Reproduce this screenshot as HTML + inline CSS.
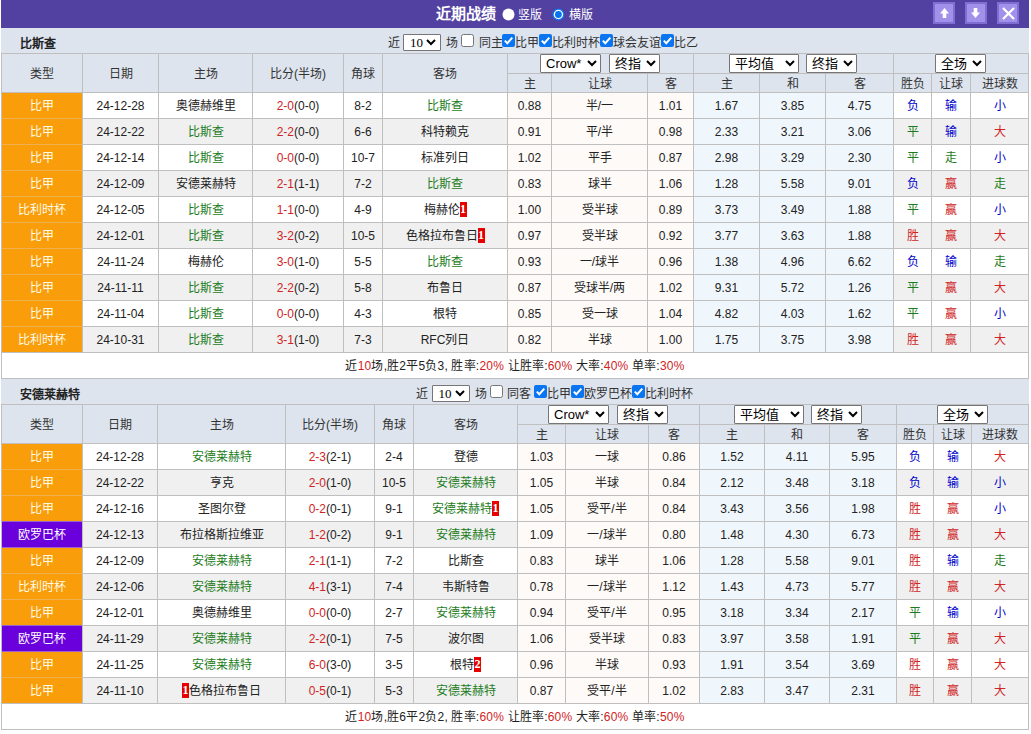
<!DOCTYPE html>
<html lang="zh-CN"><head><meta charset="utf-8"><style>
html,body{margin:0;padding:0;background:#fff;width:1031px;height:734px;overflow:hidden;}
body{font-family:"Liberation Sans",sans-serif;font-size:12px;color:#333;position:relative;}
.a{position:absolute;box-sizing:content-box;}
.c{text-align:center;white-space:nowrap;}
.l{text-align:left;white-space:nowrap;}
.b{font-weight:bold;}
.h{color:#333;}
.d{color:#222;}
.g{color:#333;}
.bd{background:#e60000;color:#fff;font-weight:bold;display:inline-block;width:7px;height:15px;line-height:15px;text-align:center;vertical-align:top;margin-top:4px;font-family:"Liberation Serif",serif;}
.sel{background:#fff;border:1px solid #767676;border-radius:1px;}
.sl{position:absolute;left:5px;top:0;line-height:17px;font-size:13px;color:#000;}
.sl.mono{font-family:"Liberation Serif",serif;font-size:13px;}
</style></head><body>
<div class="a" style="left:1px;top:0px;width:1028px;height:28px;background:#5241a0;"></div><div class="a l b" style="left:436px;top:4px;width:62px;height:20px;line-height:20px;color:#fff;font-size:15px;">近期战绩</div><svg class="a" style="left:500px;top:6px" width="17" height="17" viewBox="0 0 17 17"><circle cx="8.5" cy="8.5" r="6" fill="#fff"/></svg><div class="a l" style="left:518px;top:6px;width:30px;height:18px;line-height:18px;color:#fff;">竖版</div><svg class="a" style="left:550px;top:6px" width="17" height="17" viewBox="0 0 17 17"><circle cx="8.4" cy="8.5" r="5.4" fill="#fff" stroke="#0a75f0" stroke-width="1.3"/><circle cx="8.4" cy="8.5" r="3.4" fill="#0a75f0"/></svg><div class="a l" style="left:569px;top:6px;width:30px;height:18px;line-height:18px;color:#fff;">横版</div><div class="a" style="left:933px;top:2px;width:18px;height:18px;background:#a291ea;border:2px solid #7f6fd2"><svg style="position:absolute;left:5px;top:4px" width="11" height="11" viewBox="0 0 11 11"><path d="M4.5 0 L9 5.5 L6.3 5.5 L6.3 10 L2.7 10 L2.7 5.5 L0 5.5 Z" fill="#fff"/></svg></div><div class="a" style="left:965px;top:2px;width:18px;height:18px;background:#a291ea;border:2px solid #7f6fd2"><svg style="position:absolute;left:4px;top:4px" width="11" height="11" viewBox="0 0 11 11"><path d="M4.5 10 L9 4.5 L6.3 4.5 L6.3 0 L2.7 0 L2.7 4.5 L0 4.5 Z" fill="#fff"/></svg></div><div class="a" style="left:997px;top:2px;width:18px;height:18px;background:#a291ea;border:2px solid #7f6fd2"><svg style="position:absolute;left:3px;top:3px" width="13" height="13" viewBox="0 0 13 13"><path d="M1 1 L12 12 M12 1 L1 12" stroke="#fff" stroke-width="2.2" fill="none"/></svg></div><div class="a" style="left:1px;top:28px;width:1028px;height:25px;background:#dde4ee;"></div><div class="a l b" style="left:20px;top:34px;width:120px;height:20px;line-height:20px;color:#222;">比斯查</div><div class="a l g" style="left:387.5px;top:35px;width:14px;height:16px;line-height:16px;">近</div><div class="a sel" style="left:403.0px;top:34px;width:36px;height:15px;"><span class="sl mono" style="left:6px;line-height:15px">10</span><svg width="10" height="7" viewBox="0 0 10 7" style="position:absolute;right:4px;top:4px"><path d="M1 1 L5 5 L9 1" fill="none" stroke="#000" stroke-width="2"/></svg></div><div class="a l g" style="left:446.0px;top:35px;width:14px;height:16px;line-height:16px;">场</div><svg class="a" style="left:461.0px;top:34px" width="13" height="13" viewBox="0 0 13 13"><rect x="0.5" y="0.5" width="12" height="12" rx="2" fill="#fff" stroke="#767676"/></svg><div class="a l g" style="left:478.5px;top:35px;width:30px;height:16px;line-height:16px;">同主</div><svg class="a" style="left:502px;top:34px" width="13" height="13" viewBox="0 0 13 13"><rect x="0" y="0" width="13" height="13" rx="2" fill="#0a75f0"/><path d="M2.8 6.6 L5.3 9.2 L10.3 3.6" fill="none" stroke="#fff" stroke-width="2"/></svg><div class="a l g" style="left:515.2px;top:35px;width:28px;height:16px;line-height:16px;">比甲</div><svg class="a" style="left:539px;top:34px" width="13" height="13" viewBox="0 0 13 13"><rect x="0" y="0" width="13" height="13" rx="2" fill="#0a75f0"/><path d="M2.8 6.6 L5.3 9.2 L10.3 3.6" fill="none" stroke="#fff" stroke-width="2"/></svg><div class="a l g" style="left:552.2px;top:35px;width:52px;height:16px;line-height:16px;">比利时杯</div><svg class="a" style="left:600px;top:34px" width="13" height="13" viewBox="0 0 13 13"><rect x="0" y="0" width="13" height="13" rx="2" fill="#0a75f0"/><path d="M2.8 6.6 L5.3 9.2 L10.3 3.6" fill="none" stroke="#fff" stroke-width="2"/></svg><div class="a l g" style="left:613.2px;top:35px;width:52px;height:16px;line-height:16px;">球会友谊</div><svg class="a" style="left:661px;top:34px" width="13" height="13" viewBox="0 0 13 13"><rect x="0" y="0" width="13" height="13" rx="2" fill="#0a75f0"/><path d="M2.8 6.6 L5.3 9.2 L10.3 3.6" fill="none" stroke="#fff" stroke-width="2"/></svg><div class="a l g" style="left:674.2px;top:35px;width:28px;height:16px;line-height:16px;">比乙</div><div class="a" style="left:1px;top:53px;width:1028px;height:39px;background:#dde4ee;"></div><div class="a" style="left:1px;top:93px;width:1028px;height:25px;background:#fff;"></div><div class="a" style="left:2px;top:93px;width:80px;height:25px;background:#fa9d0b;"></div><div class="a" style="left:508px;top:93px;width:185px;height:25px;background:#fdfaf8;"></div><div class="a" style="left:694px;top:93px;width:199px;height:25px;background:#f0f7fc;"></div><div class="a" style="left:1px;top:119px;width:1028px;height:25px;background:#f0f0f0;"></div><div class="a" style="left:2px;top:119px;width:80px;height:25px;background:#fa9d0b;"></div><div class="a" style="left:508px;top:119px;width:185px;height:25px;background:#fdfaf8;"></div><div class="a" style="left:694px;top:119px;width:199px;height:25px;background:#f0f7fc;"></div><div class="a" style="left:1px;top:145px;width:1028px;height:25px;background:#fff;"></div><div class="a" style="left:2px;top:145px;width:80px;height:25px;background:#fa9d0b;"></div><div class="a" style="left:508px;top:145px;width:185px;height:25px;background:#fdfaf8;"></div><div class="a" style="left:694px;top:145px;width:199px;height:25px;background:#f0f7fc;"></div><div class="a" style="left:1px;top:171px;width:1028px;height:25px;background:#f0f0f0;"></div><div class="a" style="left:2px;top:171px;width:80px;height:25px;background:#fa9d0b;"></div><div class="a" style="left:508px;top:171px;width:185px;height:25px;background:#fdfaf8;"></div><div class="a" style="left:694px;top:171px;width:199px;height:25px;background:#f0f7fc;"></div><div class="a" style="left:1px;top:197px;width:1028px;height:25px;background:#fff;"></div><div class="a" style="left:2px;top:197px;width:80px;height:25px;background:#fa9d0b;"></div><div class="a" style="left:508px;top:197px;width:185px;height:25px;background:#fdfaf8;"></div><div class="a" style="left:694px;top:197px;width:199px;height:25px;background:#f0f7fc;"></div><div class="a" style="left:1px;top:223px;width:1028px;height:25px;background:#f0f0f0;"></div><div class="a" style="left:2px;top:223px;width:80px;height:25px;background:#fa9d0b;"></div><div class="a" style="left:508px;top:223px;width:185px;height:25px;background:#fdfaf8;"></div><div class="a" style="left:694px;top:223px;width:199px;height:25px;background:#f0f7fc;"></div><div class="a" style="left:1px;top:249px;width:1028px;height:25px;background:#fff;"></div><div class="a" style="left:2px;top:249px;width:80px;height:25px;background:#fa9d0b;"></div><div class="a" style="left:508px;top:249px;width:185px;height:25px;background:#fdfaf8;"></div><div class="a" style="left:694px;top:249px;width:199px;height:25px;background:#f0f7fc;"></div><div class="a" style="left:1px;top:275px;width:1028px;height:25px;background:#f0f0f0;"></div><div class="a" style="left:2px;top:275px;width:80px;height:25px;background:#fa9d0b;"></div><div class="a" style="left:508px;top:275px;width:185px;height:25px;background:#fdfaf8;"></div><div class="a" style="left:694px;top:275px;width:199px;height:25px;background:#f0f7fc;"></div><div class="a" style="left:1px;top:301px;width:1028px;height:25px;background:#fff;"></div><div class="a" style="left:2px;top:301px;width:80px;height:25px;background:#fa9d0b;"></div><div class="a" style="left:508px;top:301px;width:185px;height:25px;background:#fdfaf8;"></div><div class="a" style="left:694px;top:301px;width:199px;height:25px;background:#f0f7fc;"></div><div class="a" style="left:1px;top:327px;width:1028px;height:25px;background:#f0f0f0;"></div><div class="a" style="left:2px;top:327px;width:80px;height:25px;background:#fa9d0b;"></div><div class="a" style="left:508px;top:327px;width:185px;height:25px;background:#fdfaf8;"></div><div class="a" style="left:694px;top:327px;width:199px;height:25px;background:#f0f7fc;"></div><div class="a" style="left:1px;top:353px;width:1028px;height:25px;background:#fff;"></div><div class="a" style="left:1px;top:53px;width:1028px;height:1px;background:#bfbfbf;"></div><div class="a" style="left:507px;top:73px;width:522px;height:1px;background:#bfbfbf;"></div><div class="a" style="left:1px;top:92px;width:1028px;height:1px;background:#bfbfbf;"></div><div class="a" style="left:1px;top:118px;width:1028px;height:1px;background:#bfbfbf;"></div><div class="a" style="left:1px;top:144px;width:1028px;height:1px;background:#bfbfbf;"></div><div class="a" style="left:1px;top:170px;width:1028px;height:1px;background:#bfbfbf;"></div><div class="a" style="left:1px;top:196px;width:1028px;height:1px;background:#bfbfbf;"></div><div class="a" style="left:1px;top:222px;width:1028px;height:1px;background:#bfbfbf;"></div><div class="a" style="left:1px;top:248px;width:1028px;height:1px;background:#bfbfbf;"></div><div class="a" style="left:1px;top:274px;width:1028px;height:1px;background:#bfbfbf;"></div><div class="a" style="left:1px;top:300px;width:1028px;height:1px;background:#bfbfbf;"></div><div class="a" style="left:1px;top:326px;width:1028px;height:1px;background:#bfbfbf;"></div><div class="a" style="left:1px;top:352px;width:1028px;height:1px;background:#bfbfbf;"></div><div class="a" style="left:1px;top:378px;width:1028px;height:1px;background:#bfbfbf;"></div><div class="a" style="left:1px;top:53px;width:1px;height:300px;background:#bfbfbf;"></div><div class="a" style="left:82px;top:53px;width:1px;height:300px;background:#bfbfbf;"></div><div class="a" style="left:158px;top:53px;width:1px;height:300px;background:#bfbfbf;"></div><div class="a" style="left:252px;top:53px;width:1px;height:300px;background:#bfbfbf;"></div><div class="a" style="left:343px;top:53px;width:1px;height:300px;background:#bfbfbf;"></div><div class="a" style="left:382px;top:53px;width:1px;height:300px;background:#bfbfbf;"></div><div class="a" style="left:507px;top:53px;width:1px;height:300px;background:#bfbfbf;"></div><div class="a" style="left:551px;top:73px;width:1px;height:280px;background:#bfbfbf;"></div><div class="a" style="left:647px;top:73px;width:1px;height:280px;background:#bfbfbf;"></div><div class="a" style="left:693px;top:53px;width:1px;height:300px;background:#bfbfbf;"></div><div class="a" style="left:759px;top:73px;width:1px;height:280px;background:#bfbfbf;"></div><div class="a" style="left:825px;top:73px;width:1px;height:280px;background:#bfbfbf;"></div><div class="a" style="left:893px;top:53px;width:1px;height:300px;background:#bfbfbf;"></div><div class="a" style="left:931px;top:73px;width:1px;height:280px;background:#bfbfbf;"></div><div class="a" style="left:970px;top:73px;width:1px;height:280px;background:#bfbfbf;"></div><div class="a" style="left:1028px;top:53px;width:1px;height:300px;background:#bfbfbf;"></div><div class="a" style="left:1px;top:352px;width:1px;height:27px;background:#bfbfbf;"></div><div class="a" style="left:1028px;top:352px;width:1px;height:27px;background:#bfbfbf;"></div><div class="a" style="left:2px;top:118px;width:80px;height:1px;background:#f0b050;"></div><div class="a" style="left:2px;top:144px;width:80px;height:1px;background:#f0b050;"></div><div class="a" style="left:2px;top:170px;width:80px;height:1px;background:#f0b050;"></div><div class="a" style="left:2px;top:196px;width:80px;height:1px;background:#f0b050;"></div><div class="a" style="left:2px;top:222px;width:80px;height:1px;background:#f0b050;"></div><div class="a" style="left:2px;top:248px;width:80px;height:1px;background:#f0b050;"></div><div class="a" style="left:2px;top:274px;width:80px;height:1px;background:#f0b050;"></div><div class="a" style="left:2px;top:300px;width:80px;height:1px;background:#f0b050;"></div><div class="a" style="left:2px;top:326px;width:80px;height:1px;background:#f0b050;"></div><div class="a c h" style="left:2px;top:55px;width:80px;height:38px;line-height:38px;">类型</div><div class="a c h" style="left:83px;top:55px;width:75px;height:38px;line-height:38px;">日期</div><div class="a c h" style="left:159px;top:55px;width:93px;height:38px;line-height:38px;">主场</div><div class="a c h" style="left:253px;top:55px;width:90px;height:38px;line-height:38px;">比分(半场)</div><div class="a c h" style="left:344px;top:55px;width:38px;height:38px;line-height:38px;">角球</div><div class="a c h" style="left:383px;top:55px;width:124px;height:38px;line-height:38px;">客场</div><div class="a c h" style="left:508px;top:75px;width:43px;height:18px;line-height:18px;">主</div><div class="a c h" style="left:552px;top:75px;width:95px;height:18px;line-height:18px;">让球</div><div class="a c h" style="left:648px;top:75px;width:45px;height:18px;line-height:18px;">客</div><div class="a c h" style="left:694px;top:75px;width:65px;height:18px;line-height:18px;">主</div><div class="a c h" style="left:760px;top:75px;width:65px;height:18px;line-height:18px;">和</div><div class="a c h" style="left:826px;top:75px;width:67px;height:18px;line-height:18px;">客</div><div class="a c h" style="left:894px;top:75px;width:37px;height:18px;line-height:18px;">胜负</div><div class="a c h" style="left:932px;top:75px;width:38px;height:18px;line-height:18px;">让球</div><div class="a c h" style="left:971px;top:75px;width:57px;height:18px;line-height:18px;">进球数</div><div class="a sel" style="left:540px;top:54px;width:59px;height:17px;"><span class="sl " style="left:5px;line-height:17px">Crow*</span><svg width="10" height="7" viewBox="0 0 10 7" style="position:absolute;right:3px;top:5px"><path d="M1 1 L5 5 L9 1" fill="none" stroke="#000" stroke-width="2"/></svg></div><div class="a sel" style="left:609px;top:54px;width:49px;height:17px;"><span class="sl " style="left:5px;line-height:17px">终指</span><svg width="10" height="7" viewBox="0 0 10 7" style="position:absolute;right:3px;top:5px"><path d="M1 1 L5 5 L9 1" fill="none" stroke="#000" stroke-width="2"/></svg></div><div class="a sel" style="left:729px;top:54px;width:68px;height:17px;"><span class="sl " style="left:5px;line-height:17px">平均值</span><svg width="10" height="7" viewBox="0 0 10 7" style="position:absolute;right:3px;top:5px"><path d="M1 1 L5 5 L9 1" fill="none" stroke="#000" stroke-width="2"/></svg></div><div class="a sel" style="left:806px;top:54px;width:49px;height:17px;"><span class="sl " style="left:5px;line-height:17px">终指</span><svg width="10" height="7" viewBox="0 0 10 7" style="position:absolute;right:3px;top:5px"><path d="M1 1 L5 5 L9 1" fill="none" stroke="#000" stroke-width="2"/></svg></div><div class="a sel" style="left:935px;top:54px;width:49px;height:17px;"><span class="sl " style="left:5px;line-height:17px">全场</span><svg width="10" height="7" viewBox="0 0 10 7" style="position:absolute;right:3px;top:5px"><path d="M1 1 L5 5 L9 1" fill="none" stroke="#000" stroke-width="2"/></svg></div><div class="a c d" style="left:2px;top:94px;width:80px;height:25px;line-height:25px;"><span style="color:#fffbe6">比甲</span></div><div class="a c d" style="left:83px;top:94px;width:75px;height:25px;line-height:25px;">24-12-28</div><div class="a c d" style="left:159px;top:94px;width:93px;height:25px;line-height:25px;"><span style="color:#222">奥德赫维里</span></div><div class="a c d" style="left:253px;top:94px;width:90px;height:25px;line-height:25px;"><span style="color:#d02424">2-0</span>(0-0)</div><div class="a c d" style="left:344px;top:94px;width:38px;height:25px;line-height:25px;">8-2</div><div class="a c d" style="left:383px;top:94px;width:124px;height:25px;line-height:25px;"><span style="color:#1c7c1c">比斯查</span></div><div class="a c d" style="left:508px;top:94px;width:43px;height:25px;line-height:25px;">0.88</div><div class="a c d" style="left:552px;top:94px;width:95px;height:25px;line-height:25px;">半/一</div><div class="a c d" style="left:648px;top:94px;width:45px;height:25px;line-height:25px;">1.01</div><div class="a c d" style="left:694px;top:94px;width:65px;height:25px;line-height:25px;">1.67</div><div class="a c d" style="left:760px;top:94px;width:65px;height:25px;line-height:25px;">3.85</div><div class="a c d" style="left:826px;top:94px;width:67px;height:25px;line-height:25px;">4.75</div><div class="a c d" style="left:894px;top:94px;width:37px;height:25px;line-height:25px;"><span style="color:#0000cc">负</span></div><div class="a c d" style="left:932px;top:94px;width:38px;height:25px;line-height:25px;"><span style="color:#0000cc">输</span></div><div class="a c d" style="left:971px;top:94px;width:57px;height:25px;line-height:25px;"><span style="color:#0000cc">小</span></div><div class="a c d" style="left:2px;top:120px;width:80px;height:25px;line-height:25px;"><span style="color:#fffbe6">比甲</span></div><div class="a c d" style="left:83px;top:120px;width:75px;height:25px;line-height:25px;">24-12-22</div><div class="a c d" style="left:159px;top:120px;width:93px;height:25px;line-height:25px;"><span style="color:#1c7c1c">比斯查</span></div><div class="a c d" style="left:253px;top:120px;width:90px;height:25px;line-height:25px;"><span style="color:#d02424">2-2</span>(0-0)</div><div class="a c d" style="left:344px;top:120px;width:38px;height:25px;line-height:25px;">6-6</div><div class="a c d" style="left:383px;top:120px;width:124px;height:25px;line-height:25px;"><span style="color:#222">科特赖克</span></div><div class="a c d" style="left:508px;top:120px;width:43px;height:25px;line-height:25px;">0.91</div><div class="a c d" style="left:552px;top:120px;width:95px;height:25px;line-height:25px;">平/半</div><div class="a c d" style="left:648px;top:120px;width:45px;height:25px;line-height:25px;">0.98</div><div class="a c d" style="left:694px;top:120px;width:65px;height:25px;line-height:25px;">2.33</div><div class="a c d" style="left:760px;top:120px;width:65px;height:25px;line-height:25px;">3.21</div><div class="a c d" style="left:826px;top:120px;width:67px;height:25px;line-height:25px;">3.06</div><div class="a c d" style="left:894px;top:120px;width:37px;height:25px;line-height:25px;"><span style="color:#1c7c1c">平</span></div><div class="a c d" style="left:932px;top:120px;width:38px;height:25px;line-height:25px;"><span style="color:#0000cc">输</span></div><div class="a c d" style="left:971px;top:120px;width:57px;height:25px;line-height:25px;"><span style="color:#d02424">大</span></div><div class="a c d" style="left:2px;top:146px;width:80px;height:25px;line-height:25px;"><span style="color:#fffbe6">比甲</span></div><div class="a c d" style="left:83px;top:146px;width:75px;height:25px;line-height:25px;">24-12-14</div><div class="a c d" style="left:159px;top:146px;width:93px;height:25px;line-height:25px;"><span style="color:#1c7c1c">比斯查</span></div><div class="a c d" style="left:253px;top:146px;width:90px;height:25px;line-height:25px;"><span style="color:#d02424">0-0</span>(0-0)</div><div class="a c d" style="left:344px;top:146px;width:38px;height:25px;line-height:25px;">10-7</div><div class="a c d" style="left:383px;top:146px;width:124px;height:25px;line-height:25px;"><span style="color:#222">标准列日</span></div><div class="a c d" style="left:508px;top:146px;width:43px;height:25px;line-height:25px;">1.02</div><div class="a c d" style="left:552px;top:146px;width:95px;height:25px;line-height:25px;">平手</div><div class="a c d" style="left:648px;top:146px;width:45px;height:25px;line-height:25px;">0.87</div><div class="a c d" style="left:694px;top:146px;width:65px;height:25px;line-height:25px;">2.98</div><div class="a c d" style="left:760px;top:146px;width:65px;height:25px;line-height:25px;">3.29</div><div class="a c d" style="left:826px;top:146px;width:67px;height:25px;line-height:25px;">2.30</div><div class="a c d" style="left:894px;top:146px;width:37px;height:25px;line-height:25px;"><span style="color:#1c7c1c">平</span></div><div class="a c d" style="left:932px;top:146px;width:38px;height:25px;line-height:25px;"><span style="color:#1c7c1c">走</span></div><div class="a c d" style="left:971px;top:146px;width:57px;height:25px;line-height:25px;"><span style="color:#0000cc">小</span></div><div class="a c d" style="left:2px;top:172px;width:80px;height:25px;line-height:25px;"><span style="color:#fffbe6">比甲</span></div><div class="a c d" style="left:83px;top:172px;width:75px;height:25px;line-height:25px;">24-12-09</div><div class="a c d" style="left:159px;top:172px;width:93px;height:25px;line-height:25px;"><span style="color:#222">安德莱赫特</span></div><div class="a c d" style="left:253px;top:172px;width:90px;height:25px;line-height:25px;"><span style="color:#d02424">2-1</span>(1-1)</div><div class="a c d" style="left:344px;top:172px;width:38px;height:25px;line-height:25px;">7-2</div><div class="a c d" style="left:383px;top:172px;width:124px;height:25px;line-height:25px;"><span style="color:#1c7c1c">比斯查</span></div><div class="a c d" style="left:508px;top:172px;width:43px;height:25px;line-height:25px;">0.83</div><div class="a c d" style="left:552px;top:172px;width:95px;height:25px;line-height:25px;">球半</div><div class="a c d" style="left:648px;top:172px;width:45px;height:25px;line-height:25px;">1.06</div><div class="a c d" style="left:694px;top:172px;width:65px;height:25px;line-height:25px;">1.28</div><div class="a c d" style="left:760px;top:172px;width:65px;height:25px;line-height:25px;">5.58</div><div class="a c d" style="left:826px;top:172px;width:67px;height:25px;line-height:25px;">9.01</div><div class="a c d" style="left:894px;top:172px;width:37px;height:25px;line-height:25px;"><span style="color:#0000cc">负</span></div><div class="a c d" style="left:932px;top:172px;width:38px;height:25px;line-height:25px;"><span style="color:#d02424">赢</span></div><div class="a c d" style="left:971px;top:172px;width:57px;height:25px;line-height:25px;"><span style="color:#1c7c1c">走</span></div><div class="a c d" style="left:2px;top:198px;width:80px;height:25px;line-height:25px;"><span style="color:#fffbe6">比利时杯</span></div><div class="a c d" style="left:83px;top:198px;width:75px;height:25px;line-height:25px;">24-12-05</div><div class="a c d" style="left:159px;top:198px;width:93px;height:25px;line-height:25px;"><span style="color:#1c7c1c">比斯查</span></div><div class="a c d" style="left:253px;top:198px;width:90px;height:25px;line-height:25px;"><span style="color:#d02424">1-1</span>(0-0)</div><div class="a c d" style="left:344px;top:198px;width:38px;height:25px;line-height:25px;">4-9</div><div class="a c d" style="left:383px;top:198px;width:124px;height:25px;line-height:25px;"><span style="color:#222">梅赫伦<span class="bd">1</span></span></div><div class="a c d" style="left:508px;top:198px;width:43px;height:25px;line-height:25px;">1.00</div><div class="a c d" style="left:552px;top:198px;width:95px;height:25px;line-height:25px;">受半球</div><div class="a c d" style="left:648px;top:198px;width:45px;height:25px;line-height:25px;">0.89</div><div class="a c d" style="left:694px;top:198px;width:65px;height:25px;line-height:25px;">3.73</div><div class="a c d" style="left:760px;top:198px;width:65px;height:25px;line-height:25px;">3.49</div><div class="a c d" style="left:826px;top:198px;width:67px;height:25px;line-height:25px;">1.88</div><div class="a c d" style="left:894px;top:198px;width:37px;height:25px;line-height:25px;"><span style="color:#1c7c1c">平</span></div><div class="a c d" style="left:932px;top:198px;width:38px;height:25px;line-height:25px;"><span style="color:#d02424">赢</span></div><div class="a c d" style="left:971px;top:198px;width:57px;height:25px;line-height:25px;"><span style="color:#0000cc">小</span></div><div class="a c d" style="left:2px;top:224px;width:80px;height:25px;line-height:25px;"><span style="color:#fffbe6">比甲</span></div><div class="a c d" style="left:83px;top:224px;width:75px;height:25px;line-height:25px;">24-12-01</div><div class="a c d" style="left:159px;top:224px;width:93px;height:25px;line-height:25px;"><span style="color:#1c7c1c">比斯查</span></div><div class="a c d" style="left:253px;top:224px;width:90px;height:25px;line-height:25px;"><span style="color:#d02424">3-2</span>(0-2)</div><div class="a c d" style="left:344px;top:224px;width:38px;height:25px;line-height:25px;">10-5</div><div class="a c d" style="left:383px;top:224px;width:124px;height:25px;line-height:25px;"><span style="color:#222">色格拉布鲁日<span class="bd">1</span></span></div><div class="a c d" style="left:508px;top:224px;width:43px;height:25px;line-height:25px;">0.97</div><div class="a c d" style="left:552px;top:224px;width:95px;height:25px;line-height:25px;">受半球</div><div class="a c d" style="left:648px;top:224px;width:45px;height:25px;line-height:25px;">0.92</div><div class="a c d" style="left:694px;top:224px;width:65px;height:25px;line-height:25px;">3.77</div><div class="a c d" style="left:760px;top:224px;width:65px;height:25px;line-height:25px;">3.63</div><div class="a c d" style="left:826px;top:224px;width:67px;height:25px;line-height:25px;">1.88</div><div class="a c d" style="left:894px;top:224px;width:37px;height:25px;line-height:25px;"><span style="color:#d02424">胜</span></div><div class="a c d" style="left:932px;top:224px;width:38px;height:25px;line-height:25px;"><span style="color:#d02424">赢</span></div><div class="a c d" style="left:971px;top:224px;width:57px;height:25px;line-height:25px;"><span style="color:#d02424">大</span></div><div class="a c d" style="left:2px;top:250px;width:80px;height:25px;line-height:25px;"><span style="color:#fffbe6">比甲</span></div><div class="a c d" style="left:83px;top:250px;width:75px;height:25px;line-height:25px;">24-11-24</div><div class="a c d" style="left:159px;top:250px;width:93px;height:25px;line-height:25px;"><span style="color:#222">梅赫伦</span></div><div class="a c d" style="left:253px;top:250px;width:90px;height:25px;line-height:25px;"><span style="color:#d02424">3-0</span>(1-0)</div><div class="a c d" style="left:344px;top:250px;width:38px;height:25px;line-height:25px;">5-5</div><div class="a c d" style="left:383px;top:250px;width:124px;height:25px;line-height:25px;"><span style="color:#1c7c1c">比斯查</span></div><div class="a c d" style="left:508px;top:250px;width:43px;height:25px;line-height:25px;">0.93</div><div class="a c d" style="left:552px;top:250px;width:95px;height:25px;line-height:25px;">一/球半</div><div class="a c d" style="left:648px;top:250px;width:45px;height:25px;line-height:25px;">0.96</div><div class="a c d" style="left:694px;top:250px;width:65px;height:25px;line-height:25px;">1.38</div><div class="a c d" style="left:760px;top:250px;width:65px;height:25px;line-height:25px;">4.96</div><div class="a c d" style="left:826px;top:250px;width:67px;height:25px;line-height:25px;">6.62</div><div class="a c d" style="left:894px;top:250px;width:37px;height:25px;line-height:25px;"><span style="color:#0000cc">负</span></div><div class="a c d" style="left:932px;top:250px;width:38px;height:25px;line-height:25px;"><span style="color:#0000cc">输</span></div><div class="a c d" style="left:971px;top:250px;width:57px;height:25px;line-height:25px;"><span style="color:#1c7c1c">走</span></div><div class="a c d" style="left:2px;top:276px;width:80px;height:25px;line-height:25px;"><span style="color:#fffbe6">比甲</span></div><div class="a c d" style="left:83px;top:276px;width:75px;height:25px;line-height:25px;">24-11-11</div><div class="a c d" style="left:159px;top:276px;width:93px;height:25px;line-height:25px;"><span style="color:#1c7c1c">比斯查</span></div><div class="a c d" style="left:253px;top:276px;width:90px;height:25px;line-height:25px;"><span style="color:#d02424">2-2</span>(0-2)</div><div class="a c d" style="left:344px;top:276px;width:38px;height:25px;line-height:25px;">5-8</div><div class="a c d" style="left:383px;top:276px;width:124px;height:25px;line-height:25px;"><span style="color:#222">布鲁日</span></div><div class="a c d" style="left:508px;top:276px;width:43px;height:25px;line-height:25px;">0.87</div><div class="a c d" style="left:552px;top:276px;width:95px;height:25px;line-height:25px;">受球半/两</div><div class="a c d" style="left:648px;top:276px;width:45px;height:25px;line-height:25px;">1.02</div><div class="a c d" style="left:694px;top:276px;width:65px;height:25px;line-height:25px;">9.31</div><div class="a c d" style="left:760px;top:276px;width:65px;height:25px;line-height:25px;">5.72</div><div class="a c d" style="left:826px;top:276px;width:67px;height:25px;line-height:25px;">1.26</div><div class="a c d" style="left:894px;top:276px;width:37px;height:25px;line-height:25px;"><span style="color:#1c7c1c">平</span></div><div class="a c d" style="left:932px;top:276px;width:38px;height:25px;line-height:25px;"><span style="color:#d02424">赢</span></div><div class="a c d" style="left:971px;top:276px;width:57px;height:25px;line-height:25px;"><span style="color:#d02424">大</span></div><div class="a c d" style="left:2px;top:302px;width:80px;height:25px;line-height:25px;"><span style="color:#fffbe6">比甲</span></div><div class="a c d" style="left:83px;top:302px;width:75px;height:25px;line-height:25px;">24-11-04</div><div class="a c d" style="left:159px;top:302px;width:93px;height:25px;line-height:25px;"><span style="color:#1c7c1c">比斯查</span></div><div class="a c d" style="left:253px;top:302px;width:90px;height:25px;line-height:25px;"><span style="color:#d02424">0-0</span>(0-0)</div><div class="a c d" style="left:344px;top:302px;width:38px;height:25px;line-height:25px;">4-3</div><div class="a c d" style="left:383px;top:302px;width:124px;height:25px;line-height:25px;"><span style="color:#222">根特</span></div><div class="a c d" style="left:508px;top:302px;width:43px;height:25px;line-height:25px;">0.85</div><div class="a c d" style="left:552px;top:302px;width:95px;height:25px;line-height:25px;">受一球</div><div class="a c d" style="left:648px;top:302px;width:45px;height:25px;line-height:25px;">1.04</div><div class="a c d" style="left:694px;top:302px;width:65px;height:25px;line-height:25px;">4.82</div><div class="a c d" style="left:760px;top:302px;width:65px;height:25px;line-height:25px;">4.03</div><div class="a c d" style="left:826px;top:302px;width:67px;height:25px;line-height:25px;">1.62</div><div class="a c d" style="left:894px;top:302px;width:37px;height:25px;line-height:25px;"><span style="color:#1c7c1c">平</span></div><div class="a c d" style="left:932px;top:302px;width:38px;height:25px;line-height:25px;"><span style="color:#d02424">赢</span></div><div class="a c d" style="left:971px;top:302px;width:57px;height:25px;line-height:25px;"><span style="color:#0000cc">小</span></div><div class="a c d" style="left:2px;top:328px;width:80px;height:25px;line-height:25px;"><span style="color:#fffbe6">比利时杯</span></div><div class="a c d" style="left:83px;top:328px;width:75px;height:25px;line-height:25px;">24-10-31</div><div class="a c d" style="left:159px;top:328px;width:93px;height:25px;line-height:25px;"><span style="color:#1c7c1c">比斯查</span></div><div class="a c d" style="left:253px;top:328px;width:90px;height:25px;line-height:25px;"><span style="color:#d02424">3-1</span>(1-0)</div><div class="a c d" style="left:344px;top:328px;width:38px;height:25px;line-height:25px;">7-3</div><div class="a c d" style="left:383px;top:328px;width:124px;height:25px;line-height:25px;"><span style="color:#222">RFC列日</span></div><div class="a c d" style="left:508px;top:328px;width:43px;height:25px;line-height:25px;">0.82</div><div class="a c d" style="left:552px;top:328px;width:95px;height:25px;line-height:25px;">半球</div><div class="a c d" style="left:648px;top:328px;width:45px;height:25px;line-height:25px;">1.00</div><div class="a c d" style="left:694px;top:328px;width:65px;height:25px;line-height:25px;">1.75</div><div class="a c d" style="left:760px;top:328px;width:65px;height:25px;line-height:25px;">3.75</div><div class="a c d" style="left:826px;top:328px;width:67px;height:25px;line-height:25px;">3.98</div><div class="a c d" style="left:894px;top:328px;width:37px;height:25px;line-height:25px;"><span style="color:#d02424">胜</span></div><div class="a c d" style="left:932px;top:328px;width:38px;height:25px;line-height:25px;"><span style="color:#d02424">赢</span></div><div class="a c d" style="left:971px;top:328px;width:57px;height:25px;line-height:25px;"><span style="color:#d02424">大</span></div><div class="a c d" style="left:1px;top:354px;width:1028px;height:25px;line-height:25px;letter-spacing:0.2px;">近<span style="color:#d02424">10</span>场,胜2平5负3, 胜率:<span style="color:#d02424">20%</span> 让胜率:<span style="color:#d02424">60%</span> 大率:<span style="color:#d02424">40%</span> 单率:<span style="color:#d02424">30%</span></div><div class="a" style="left:1px;top:379px;width:1028px;height:25px;background:#dde4ee;"></div><div class="a l b" style="left:20px;top:385px;width:120px;height:20px;line-height:20px;color:#222;">安德莱赫特</div><div class="a l g" style="left:416px;top:386px;width:14px;height:16px;line-height:16px;">近</div><div class="a sel" style="left:431.5px;top:385px;width:36px;height:15px;"><span class="sl mono" style="left:6px;line-height:15px">10</span><svg width="10" height="7" viewBox="0 0 10 7" style="position:absolute;right:4px;top:4px"><path d="M1 1 L5 5 L9 1" fill="none" stroke="#000" stroke-width="2"/></svg></div><div class="a l g" style="left:474.5px;top:386px;width:14px;height:16px;line-height:16px;">场</div><svg class="a" style="left:489.5px;top:385px" width="13" height="13" viewBox="0 0 13 13"><rect x="0.5" y="0.5" width="12" height="12" rx="2" fill="#fff" stroke="#767676"/></svg><div class="a l g" style="left:507px;top:386px;width:30px;height:16px;line-height:16px;">同客</div><svg class="a" style="left:534px;top:385px" width="13" height="13" viewBox="0 0 13 13"><rect x="0" y="0" width="13" height="13" rx="2" fill="#0a75f0"/><path d="M2.8 6.6 L5.3 9.2 L10.3 3.6" fill="none" stroke="#fff" stroke-width="2"/></svg><div class="a l g" style="left:547.3px;top:386px;width:28px;height:16px;line-height:16px;">比甲</div><svg class="a" style="left:571px;top:385px" width="13" height="13" viewBox="0 0 13 13"><rect x="0" y="0" width="13" height="13" rx="2" fill="#0a75f0"/><path d="M2.8 6.6 L5.3 9.2 L10.3 3.6" fill="none" stroke="#fff" stroke-width="2"/></svg><div class="a l g" style="left:584.3px;top:386px;width:52px;height:16px;line-height:16px;">欧罗巴杯</div><svg class="a" style="left:632px;top:385px" width="13" height="13" viewBox="0 0 13 13"><rect x="0" y="0" width="13" height="13" rx="2" fill="#0a75f0"/><path d="M2.8 6.6 L5.3 9.2 L10.3 3.6" fill="none" stroke="#fff" stroke-width="2"/></svg><div class="a l g" style="left:645.3px;top:386px;width:52px;height:16px;line-height:16px;">比利时杯</div><div class="a" style="left:1px;top:404px;width:1028px;height:39px;background:#dde4ee;"></div><div class="a" style="left:1px;top:444px;width:1028px;height:25px;background:#fff;"></div><div class="a" style="left:2px;top:444px;width:80px;height:25px;background:#fa9d0b;"></div><div class="a" style="left:518px;top:444px;width:181px;height:25px;background:#fdfaf8;"></div><div class="a" style="left:700px;top:444px;width:196px;height:25px;background:#f0f7fc;"></div><div class="a" style="left:1px;top:470px;width:1028px;height:25px;background:#f0f0f0;"></div><div class="a" style="left:2px;top:470px;width:80px;height:25px;background:#fa9d0b;"></div><div class="a" style="left:518px;top:470px;width:181px;height:25px;background:#fdfaf8;"></div><div class="a" style="left:700px;top:470px;width:196px;height:25px;background:#f0f7fc;"></div><div class="a" style="left:1px;top:496px;width:1028px;height:25px;background:#fff;"></div><div class="a" style="left:2px;top:496px;width:80px;height:25px;background:#fa9d0b;"></div><div class="a" style="left:518px;top:496px;width:181px;height:25px;background:#fdfaf8;"></div><div class="a" style="left:700px;top:496px;width:196px;height:25px;background:#f0f7fc;"></div><div class="a" style="left:1px;top:522px;width:1028px;height:25px;background:#f0f0f0;"></div><div class="a" style="left:2px;top:522px;width:80px;height:25px;background:#6a00dc;"></div><div class="a" style="left:518px;top:522px;width:181px;height:25px;background:#fdfaf8;"></div><div class="a" style="left:700px;top:522px;width:196px;height:25px;background:#f0f7fc;"></div><div class="a" style="left:1px;top:548px;width:1028px;height:25px;background:#fff;"></div><div class="a" style="left:2px;top:548px;width:80px;height:25px;background:#fa9d0b;"></div><div class="a" style="left:518px;top:548px;width:181px;height:25px;background:#fdfaf8;"></div><div class="a" style="left:700px;top:548px;width:196px;height:25px;background:#f0f7fc;"></div><div class="a" style="left:1px;top:574px;width:1028px;height:25px;background:#f0f0f0;"></div><div class="a" style="left:2px;top:574px;width:80px;height:25px;background:#fa9d0b;"></div><div class="a" style="left:518px;top:574px;width:181px;height:25px;background:#fdfaf8;"></div><div class="a" style="left:700px;top:574px;width:196px;height:25px;background:#f0f7fc;"></div><div class="a" style="left:1px;top:600px;width:1028px;height:25px;background:#fff;"></div><div class="a" style="left:2px;top:600px;width:80px;height:25px;background:#fa9d0b;"></div><div class="a" style="left:518px;top:600px;width:181px;height:25px;background:#fdfaf8;"></div><div class="a" style="left:700px;top:600px;width:196px;height:25px;background:#f0f7fc;"></div><div class="a" style="left:1px;top:626px;width:1028px;height:25px;background:#f0f0f0;"></div><div class="a" style="left:2px;top:626px;width:80px;height:25px;background:#6a00dc;"></div><div class="a" style="left:518px;top:626px;width:181px;height:25px;background:#fdfaf8;"></div><div class="a" style="left:700px;top:626px;width:196px;height:25px;background:#f0f7fc;"></div><div class="a" style="left:1px;top:652px;width:1028px;height:25px;background:#fff;"></div><div class="a" style="left:2px;top:652px;width:80px;height:25px;background:#fa9d0b;"></div><div class="a" style="left:518px;top:652px;width:181px;height:25px;background:#fdfaf8;"></div><div class="a" style="left:700px;top:652px;width:196px;height:25px;background:#f0f7fc;"></div><div class="a" style="left:1px;top:678px;width:1028px;height:25px;background:#f0f0f0;"></div><div class="a" style="left:2px;top:678px;width:80px;height:25px;background:#fa9d0b;"></div><div class="a" style="left:518px;top:678px;width:181px;height:25px;background:#fdfaf8;"></div><div class="a" style="left:700px;top:678px;width:196px;height:25px;background:#f0f7fc;"></div><div class="a" style="left:1px;top:704px;width:1028px;height:25px;background:#fff;"></div><div class="a" style="left:1px;top:404px;width:1028px;height:1px;background:#bfbfbf;"></div><div class="a" style="left:517px;top:424px;width:512px;height:1px;background:#bfbfbf;"></div><div class="a" style="left:1px;top:443px;width:1028px;height:1px;background:#bfbfbf;"></div><div class="a" style="left:1px;top:469px;width:1028px;height:1px;background:#bfbfbf;"></div><div class="a" style="left:1px;top:495px;width:1028px;height:1px;background:#bfbfbf;"></div><div class="a" style="left:1px;top:521px;width:1028px;height:1px;background:#bfbfbf;"></div><div class="a" style="left:1px;top:547px;width:1028px;height:1px;background:#bfbfbf;"></div><div class="a" style="left:1px;top:573px;width:1028px;height:1px;background:#bfbfbf;"></div><div class="a" style="left:1px;top:599px;width:1028px;height:1px;background:#bfbfbf;"></div><div class="a" style="left:1px;top:625px;width:1028px;height:1px;background:#bfbfbf;"></div><div class="a" style="left:1px;top:651px;width:1028px;height:1px;background:#bfbfbf;"></div><div class="a" style="left:1px;top:677px;width:1028px;height:1px;background:#bfbfbf;"></div><div class="a" style="left:1px;top:703px;width:1028px;height:1px;background:#bfbfbf;"></div><div class="a" style="left:1px;top:729px;width:1028px;height:1px;background:#bfbfbf;"></div><div class="a" style="left:1px;top:404px;width:1px;height:300px;background:#bfbfbf;"></div><div class="a" style="left:82px;top:404px;width:1px;height:300px;background:#bfbfbf;"></div><div class="a" style="left:157px;top:404px;width:1px;height:300px;background:#bfbfbf;"></div><div class="a" style="left:285px;top:404px;width:1px;height:300px;background:#bfbfbf;"></div><div class="a" style="left:374px;top:404px;width:1px;height:300px;background:#bfbfbf;"></div><div class="a" style="left:413px;top:404px;width:1px;height:300px;background:#bfbfbf;"></div><div class="a" style="left:517px;top:404px;width:1px;height:300px;background:#bfbfbf;"></div><div class="a" style="left:565px;top:424px;width:1px;height:280px;background:#bfbfbf;"></div><div class="a" style="left:648px;top:424px;width:1px;height:280px;background:#bfbfbf;"></div><div class="a" style="left:699px;top:404px;width:1px;height:300px;background:#bfbfbf;"></div><div class="a" style="left:764px;top:424px;width:1px;height:280px;background:#bfbfbf;"></div><div class="a" style="left:829px;top:424px;width:1px;height:280px;background:#bfbfbf;"></div><div class="a" style="left:896px;top:404px;width:1px;height:300px;background:#bfbfbf;"></div><div class="a" style="left:933px;top:424px;width:1px;height:280px;background:#bfbfbf;"></div><div class="a" style="left:971px;top:424px;width:1px;height:280px;background:#bfbfbf;"></div><div class="a" style="left:1028px;top:404px;width:1px;height:300px;background:#bfbfbf;"></div><div class="a" style="left:1px;top:703px;width:1px;height:27px;background:#bfbfbf;"></div><div class="a" style="left:1028px;top:703px;width:1px;height:27px;background:#bfbfbf;"></div><div class="a" style="left:2px;top:469px;width:80px;height:1px;background:#f0b050;"></div><div class="a" style="left:2px;top:495px;width:80px;height:1px;background:#f0b050;"></div><div class="a" style="left:2px;top:521px;width:80px;height:1px;background:#9a60d0;"></div><div class="a" style="left:2px;top:547px;width:80px;height:1px;background:#9a60d0;"></div><div class="a" style="left:2px;top:573px;width:80px;height:1px;background:#f0b050;"></div><div class="a" style="left:2px;top:599px;width:80px;height:1px;background:#f0b050;"></div><div class="a" style="left:2px;top:625px;width:80px;height:1px;background:#9a60d0;"></div><div class="a" style="left:2px;top:651px;width:80px;height:1px;background:#9a60d0;"></div><div class="a" style="left:2px;top:677px;width:80px;height:1px;background:#f0b050;"></div><div class="a c h" style="left:2px;top:406px;width:80px;height:38px;line-height:38px;">类型</div><div class="a c h" style="left:83px;top:406px;width:74px;height:38px;line-height:38px;">日期</div><div class="a c h" style="left:158px;top:406px;width:127px;height:38px;line-height:38px;">主场</div><div class="a c h" style="left:286px;top:406px;width:88px;height:38px;line-height:38px;">比分(半场)</div><div class="a c h" style="left:375px;top:406px;width:38px;height:38px;line-height:38px;">角球</div><div class="a c h" style="left:414px;top:406px;width:103px;height:38px;line-height:38px;">客场</div><div class="a c h" style="left:518px;top:426px;width:47px;height:18px;line-height:18px;">主</div><div class="a c h" style="left:566px;top:426px;width:82px;height:18px;line-height:18px;">让球</div><div class="a c h" style="left:649px;top:426px;width:50px;height:18px;line-height:18px;">客</div><div class="a c h" style="left:700px;top:426px;width:64px;height:18px;line-height:18px;">主</div><div class="a c h" style="left:765px;top:426px;width:64px;height:18px;line-height:18px;">和</div><div class="a c h" style="left:830px;top:426px;width:66px;height:18px;line-height:18px;">客</div><div class="a c h" style="left:897px;top:426px;width:36px;height:18px;line-height:18px;">胜负</div><div class="a c h" style="left:934px;top:426px;width:37px;height:18px;line-height:18px;">让球</div><div class="a c h" style="left:972px;top:426px;width:56px;height:18px;line-height:18px;">进球数</div><div class="a sel" style="left:548px;top:405px;width:59px;height:17px;"><span class="sl " style="left:5px;line-height:17px">Crow*</span><svg width="10" height="7" viewBox="0 0 10 7" style="position:absolute;right:3px;top:5px"><path d="M1 1 L5 5 L9 1" fill="none" stroke="#000" stroke-width="2"/></svg></div><div class="a sel" style="left:617px;top:405px;width:49px;height:17px;"><span class="sl " style="left:5px;line-height:17px">终指</span><svg width="10" height="7" viewBox="0 0 10 7" style="position:absolute;right:3px;top:5px"><path d="M1 1 L5 5 L9 1" fill="none" stroke="#000" stroke-width="2"/></svg></div><div class="a sel" style="left:734px;top:405px;width:68px;height:17px;"><span class="sl " style="left:5px;line-height:17px">平均值</span><svg width="10" height="7" viewBox="0 0 10 7" style="position:absolute;right:3px;top:5px"><path d="M1 1 L5 5 L9 1" fill="none" stroke="#000" stroke-width="2"/></svg></div><div class="a sel" style="left:811px;top:405px;width:49px;height:17px;"><span class="sl " style="left:5px;line-height:17px">终指</span><svg width="10" height="7" viewBox="0 0 10 7" style="position:absolute;right:3px;top:5px"><path d="M1 1 L5 5 L9 1" fill="none" stroke="#000" stroke-width="2"/></svg></div><div class="a sel" style="left:937px;top:405px;width:49px;height:17px;"><span class="sl " style="left:5px;line-height:17px">全场</span><svg width="10" height="7" viewBox="0 0 10 7" style="position:absolute;right:3px;top:5px"><path d="M1 1 L5 5 L9 1" fill="none" stroke="#000" stroke-width="2"/></svg></div><div class="a c d" style="left:2px;top:445px;width:80px;height:25px;line-height:25px;"><span style="color:#fffbe6">比甲</span></div><div class="a c d" style="left:83px;top:445px;width:74px;height:25px;line-height:25px;">24-12-28</div><div class="a c d" style="left:158px;top:445px;width:127px;height:25px;line-height:25px;"><span style="color:#1c7c1c">安德莱赫特</span></div><div class="a c d" style="left:286px;top:445px;width:88px;height:25px;line-height:25px;"><span style="color:#d02424">2-3</span>(2-1)</div><div class="a c d" style="left:375px;top:445px;width:38px;height:25px;line-height:25px;">2-4</div><div class="a c d" style="left:414px;top:445px;width:103px;height:25px;line-height:25px;"><span style="color:#222">登德</span></div><div class="a c d" style="left:518px;top:445px;width:47px;height:25px;line-height:25px;">1.03</div><div class="a c d" style="left:566px;top:445px;width:82px;height:25px;line-height:25px;">一球</div><div class="a c d" style="left:649px;top:445px;width:50px;height:25px;line-height:25px;">0.86</div><div class="a c d" style="left:700px;top:445px;width:64px;height:25px;line-height:25px;">1.52</div><div class="a c d" style="left:765px;top:445px;width:64px;height:25px;line-height:25px;">4.11</div><div class="a c d" style="left:830px;top:445px;width:66px;height:25px;line-height:25px;">5.95</div><div class="a c d" style="left:897px;top:445px;width:36px;height:25px;line-height:25px;"><span style="color:#0000cc">负</span></div><div class="a c d" style="left:934px;top:445px;width:37px;height:25px;line-height:25px;"><span style="color:#0000cc">输</span></div><div class="a c d" style="left:972px;top:445px;width:56px;height:25px;line-height:25px;"><span style="color:#d02424">大</span></div><div class="a c d" style="left:2px;top:471px;width:80px;height:25px;line-height:25px;"><span style="color:#fffbe6">比甲</span></div><div class="a c d" style="left:83px;top:471px;width:74px;height:25px;line-height:25px;">24-12-22</div><div class="a c d" style="left:158px;top:471px;width:127px;height:25px;line-height:25px;"><span style="color:#222">亨克</span></div><div class="a c d" style="left:286px;top:471px;width:88px;height:25px;line-height:25px;"><span style="color:#d02424">2-0</span>(1-0)</div><div class="a c d" style="left:375px;top:471px;width:38px;height:25px;line-height:25px;">10-5</div><div class="a c d" style="left:414px;top:471px;width:103px;height:25px;line-height:25px;"><span style="color:#1c7c1c">安德莱赫特</span></div><div class="a c d" style="left:518px;top:471px;width:47px;height:25px;line-height:25px;">1.05</div><div class="a c d" style="left:566px;top:471px;width:82px;height:25px;line-height:25px;">半球</div><div class="a c d" style="left:649px;top:471px;width:50px;height:25px;line-height:25px;">0.84</div><div class="a c d" style="left:700px;top:471px;width:64px;height:25px;line-height:25px;">2.12</div><div class="a c d" style="left:765px;top:471px;width:64px;height:25px;line-height:25px;">3.48</div><div class="a c d" style="left:830px;top:471px;width:66px;height:25px;line-height:25px;">3.18</div><div class="a c d" style="left:897px;top:471px;width:36px;height:25px;line-height:25px;"><span style="color:#0000cc">负</span></div><div class="a c d" style="left:934px;top:471px;width:37px;height:25px;line-height:25px;"><span style="color:#0000cc">输</span></div><div class="a c d" style="left:972px;top:471px;width:56px;height:25px;line-height:25px;"><span style="color:#0000cc">小</span></div><div class="a c d" style="left:2px;top:497px;width:80px;height:25px;line-height:25px;"><span style="color:#fffbe6">比甲</span></div><div class="a c d" style="left:83px;top:497px;width:74px;height:25px;line-height:25px;">24-12-16</div><div class="a c d" style="left:158px;top:497px;width:127px;height:25px;line-height:25px;"><span style="color:#222">圣图尔登</span></div><div class="a c d" style="left:286px;top:497px;width:88px;height:25px;line-height:25px;"><span style="color:#d02424">0-2</span>(0-1)</div><div class="a c d" style="left:375px;top:497px;width:38px;height:25px;line-height:25px;">9-1</div><div class="a c d" style="left:414px;top:497px;width:103px;height:25px;line-height:25px;"><span style="color:#1c7c1c">安德莱赫特<span class="bd">1</span></span></div><div class="a c d" style="left:518px;top:497px;width:47px;height:25px;line-height:25px;">1.05</div><div class="a c d" style="left:566px;top:497px;width:82px;height:25px;line-height:25px;">受平/半</div><div class="a c d" style="left:649px;top:497px;width:50px;height:25px;line-height:25px;">0.84</div><div class="a c d" style="left:700px;top:497px;width:64px;height:25px;line-height:25px;">3.43</div><div class="a c d" style="left:765px;top:497px;width:64px;height:25px;line-height:25px;">3.56</div><div class="a c d" style="left:830px;top:497px;width:66px;height:25px;line-height:25px;">1.98</div><div class="a c d" style="left:897px;top:497px;width:36px;height:25px;line-height:25px;"><span style="color:#d02424">胜</span></div><div class="a c d" style="left:934px;top:497px;width:37px;height:25px;line-height:25px;"><span style="color:#d02424">赢</span></div><div class="a c d" style="left:972px;top:497px;width:56px;height:25px;line-height:25px;"><span style="color:#0000cc">小</span></div><div class="a c d" style="left:2px;top:523px;width:80px;height:25px;line-height:25px;"><span style="color:#fff">欧罗巴杯</span></div><div class="a c d" style="left:83px;top:523px;width:74px;height:25px;line-height:25px;">24-12-13</div><div class="a c d" style="left:158px;top:523px;width:127px;height:25px;line-height:25px;"><span style="color:#222">布拉格斯拉维亚</span></div><div class="a c d" style="left:286px;top:523px;width:88px;height:25px;line-height:25px;"><span style="color:#d02424">1-2</span>(0-2)</div><div class="a c d" style="left:375px;top:523px;width:38px;height:25px;line-height:25px;">9-1</div><div class="a c d" style="left:414px;top:523px;width:103px;height:25px;line-height:25px;"><span style="color:#1c7c1c">安德莱赫特</span></div><div class="a c d" style="left:518px;top:523px;width:47px;height:25px;line-height:25px;">1.09</div><div class="a c d" style="left:566px;top:523px;width:82px;height:25px;line-height:25px;">一/球半</div><div class="a c d" style="left:649px;top:523px;width:50px;height:25px;line-height:25px;">0.80</div><div class="a c d" style="left:700px;top:523px;width:64px;height:25px;line-height:25px;">1.48</div><div class="a c d" style="left:765px;top:523px;width:64px;height:25px;line-height:25px;">4.30</div><div class="a c d" style="left:830px;top:523px;width:66px;height:25px;line-height:25px;">6.73</div><div class="a c d" style="left:897px;top:523px;width:36px;height:25px;line-height:25px;"><span style="color:#d02424">胜</span></div><div class="a c d" style="left:934px;top:523px;width:37px;height:25px;line-height:25px;"><span style="color:#d02424">赢</span></div><div class="a c d" style="left:972px;top:523px;width:56px;height:25px;line-height:25px;"><span style="color:#d02424">大</span></div><div class="a c d" style="left:2px;top:549px;width:80px;height:25px;line-height:25px;"><span style="color:#fffbe6">比甲</span></div><div class="a c d" style="left:83px;top:549px;width:74px;height:25px;line-height:25px;">24-12-09</div><div class="a c d" style="left:158px;top:549px;width:127px;height:25px;line-height:25px;"><span style="color:#1c7c1c">安德莱赫特</span></div><div class="a c d" style="left:286px;top:549px;width:88px;height:25px;line-height:25px;"><span style="color:#d02424">2-1</span>(1-1)</div><div class="a c d" style="left:375px;top:549px;width:38px;height:25px;line-height:25px;">7-2</div><div class="a c d" style="left:414px;top:549px;width:103px;height:25px;line-height:25px;"><span style="color:#222">比斯查</span></div><div class="a c d" style="left:518px;top:549px;width:47px;height:25px;line-height:25px;">0.83</div><div class="a c d" style="left:566px;top:549px;width:82px;height:25px;line-height:25px;">球半</div><div class="a c d" style="left:649px;top:549px;width:50px;height:25px;line-height:25px;">1.06</div><div class="a c d" style="left:700px;top:549px;width:64px;height:25px;line-height:25px;">1.28</div><div class="a c d" style="left:765px;top:549px;width:64px;height:25px;line-height:25px;">5.58</div><div class="a c d" style="left:830px;top:549px;width:66px;height:25px;line-height:25px;">9.01</div><div class="a c d" style="left:897px;top:549px;width:36px;height:25px;line-height:25px;"><span style="color:#d02424">胜</span></div><div class="a c d" style="left:934px;top:549px;width:37px;height:25px;line-height:25px;"><span style="color:#0000cc">输</span></div><div class="a c d" style="left:972px;top:549px;width:56px;height:25px;line-height:25px;"><span style="color:#1c7c1c">走</span></div><div class="a c d" style="left:2px;top:575px;width:80px;height:25px;line-height:25px;"><span style="color:#fffbe6">比利时杯</span></div><div class="a c d" style="left:83px;top:575px;width:74px;height:25px;line-height:25px;">24-12-06</div><div class="a c d" style="left:158px;top:575px;width:127px;height:25px;line-height:25px;"><span style="color:#1c7c1c">安德莱赫特</span></div><div class="a c d" style="left:286px;top:575px;width:88px;height:25px;line-height:25px;"><span style="color:#d02424">4-1</span>(3-1)</div><div class="a c d" style="left:375px;top:575px;width:38px;height:25px;line-height:25px;">7-4</div><div class="a c d" style="left:414px;top:575px;width:103px;height:25px;line-height:25px;"><span style="color:#222">韦斯特鲁</span></div><div class="a c d" style="left:518px;top:575px;width:47px;height:25px;line-height:25px;">0.78</div><div class="a c d" style="left:566px;top:575px;width:82px;height:25px;line-height:25px;">一/球半</div><div class="a c d" style="left:649px;top:575px;width:50px;height:25px;line-height:25px;">1.12</div><div class="a c d" style="left:700px;top:575px;width:64px;height:25px;line-height:25px;">1.43</div><div class="a c d" style="left:765px;top:575px;width:64px;height:25px;line-height:25px;">4.73</div><div class="a c d" style="left:830px;top:575px;width:66px;height:25px;line-height:25px;">5.77</div><div class="a c d" style="left:897px;top:575px;width:36px;height:25px;line-height:25px;"><span style="color:#d02424">胜</span></div><div class="a c d" style="left:934px;top:575px;width:37px;height:25px;line-height:25px;"><span style="color:#d02424">赢</span></div><div class="a c d" style="left:972px;top:575px;width:56px;height:25px;line-height:25px;"><span style="color:#d02424">大</span></div><div class="a c d" style="left:2px;top:601px;width:80px;height:25px;line-height:25px;"><span style="color:#fffbe6">比甲</span></div><div class="a c d" style="left:83px;top:601px;width:74px;height:25px;line-height:25px;">24-12-01</div><div class="a c d" style="left:158px;top:601px;width:127px;height:25px;line-height:25px;"><span style="color:#222">奥德赫维里</span></div><div class="a c d" style="left:286px;top:601px;width:88px;height:25px;line-height:25px;"><span style="color:#d02424">0-0</span>(0-0)</div><div class="a c d" style="left:375px;top:601px;width:38px;height:25px;line-height:25px;">2-7</div><div class="a c d" style="left:414px;top:601px;width:103px;height:25px;line-height:25px;"><span style="color:#1c7c1c">安德莱赫特</span></div><div class="a c d" style="left:518px;top:601px;width:47px;height:25px;line-height:25px;">0.94</div><div class="a c d" style="left:566px;top:601px;width:82px;height:25px;line-height:25px;">受平/半</div><div class="a c d" style="left:649px;top:601px;width:50px;height:25px;line-height:25px;">0.95</div><div class="a c d" style="left:700px;top:601px;width:64px;height:25px;line-height:25px;">3.18</div><div class="a c d" style="left:765px;top:601px;width:64px;height:25px;line-height:25px;">3.34</div><div class="a c d" style="left:830px;top:601px;width:66px;height:25px;line-height:25px;">2.17</div><div class="a c d" style="left:897px;top:601px;width:36px;height:25px;line-height:25px;"><span style="color:#1c7c1c">平</span></div><div class="a c d" style="left:934px;top:601px;width:37px;height:25px;line-height:25px;"><span style="color:#0000cc">输</span></div><div class="a c d" style="left:972px;top:601px;width:56px;height:25px;line-height:25px;"><span style="color:#0000cc">小</span></div><div class="a c d" style="left:2px;top:627px;width:80px;height:25px;line-height:25px;"><span style="color:#fff">欧罗巴杯</span></div><div class="a c d" style="left:83px;top:627px;width:74px;height:25px;line-height:25px;">24-11-29</div><div class="a c d" style="left:158px;top:627px;width:127px;height:25px;line-height:25px;"><span style="color:#1c7c1c">安德莱赫特</span></div><div class="a c d" style="left:286px;top:627px;width:88px;height:25px;line-height:25px;"><span style="color:#d02424">2-2</span>(0-1)</div><div class="a c d" style="left:375px;top:627px;width:38px;height:25px;line-height:25px;">7-5</div><div class="a c d" style="left:414px;top:627px;width:103px;height:25px;line-height:25px;"><span style="color:#222">波尔图</span></div><div class="a c d" style="left:518px;top:627px;width:47px;height:25px;line-height:25px;">1.06</div><div class="a c d" style="left:566px;top:627px;width:82px;height:25px;line-height:25px;">受半球</div><div class="a c d" style="left:649px;top:627px;width:50px;height:25px;line-height:25px;">0.83</div><div class="a c d" style="left:700px;top:627px;width:64px;height:25px;line-height:25px;">3.97</div><div class="a c d" style="left:765px;top:627px;width:64px;height:25px;line-height:25px;">3.58</div><div class="a c d" style="left:830px;top:627px;width:66px;height:25px;line-height:25px;">1.91</div><div class="a c d" style="left:897px;top:627px;width:36px;height:25px;line-height:25px;"><span style="color:#1c7c1c">平</span></div><div class="a c d" style="left:934px;top:627px;width:37px;height:25px;line-height:25px;"><span style="color:#d02424">赢</span></div><div class="a c d" style="left:972px;top:627px;width:56px;height:25px;line-height:25px;"><span style="color:#d02424">大</span></div><div class="a c d" style="left:2px;top:653px;width:80px;height:25px;line-height:25px;"><span style="color:#fffbe6">比甲</span></div><div class="a c d" style="left:83px;top:653px;width:74px;height:25px;line-height:25px;">24-11-25</div><div class="a c d" style="left:158px;top:653px;width:127px;height:25px;line-height:25px;"><span style="color:#1c7c1c">安德莱赫特</span></div><div class="a c d" style="left:286px;top:653px;width:88px;height:25px;line-height:25px;"><span style="color:#d02424">6-0</span>(3-0)</div><div class="a c d" style="left:375px;top:653px;width:38px;height:25px;line-height:25px;">3-5</div><div class="a c d" style="left:414px;top:653px;width:103px;height:25px;line-height:25px;"><span style="color:#222">根特<span class="bd">2</span></span></div><div class="a c d" style="left:518px;top:653px;width:47px;height:25px;line-height:25px;">0.96</div><div class="a c d" style="left:566px;top:653px;width:82px;height:25px;line-height:25px;">半球</div><div class="a c d" style="left:649px;top:653px;width:50px;height:25px;line-height:25px;">0.93</div><div class="a c d" style="left:700px;top:653px;width:64px;height:25px;line-height:25px;">1.91</div><div class="a c d" style="left:765px;top:653px;width:64px;height:25px;line-height:25px;">3.54</div><div class="a c d" style="left:830px;top:653px;width:66px;height:25px;line-height:25px;">3.69</div><div class="a c d" style="left:897px;top:653px;width:36px;height:25px;line-height:25px;"><span style="color:#d02424">胜</span></div><div class="a c d" style="left:934px;top:653px;width:37px;height:25px;line-height:25px;"><span style="color:#d02424">赢</span></div><div class="a c d" style="left:972px;top:653px;width:56px;height:25px;line-height:25px;"><span style="color:#d02424">大</span></div><div class="a c d" style="left:2px;top:679px;width:80px;height:25px;line-height:25px;"><span style="color:#fffbe6">比甲</span></div><div class="a c d" style="left:83px;top:679px;width:74px;height:25px;line-height:25px;">24-11-10</div><div class="a c d" style="left:158px;top:679px;width:127px;height:25px;line-height:25px;"><span style="color:#222"><span class="bd">1</span>色格拉布鲁日</span></div><div class="a c d" style="left:286px;top:679px;width:88px;height:25px;line-height:25px;"><span style="color:#d02424">0-5</span>(0-1)</div><div class="a c d" style="left:375px;top:679px;width:38px;height:25px;line-height:25px;">5-3</div><div class="a c d" style="left:414px;top:679px;width:103px;height:25px;line-height:25px;"><span style="color:#1c7c1c">安德莱赫特</span></div><div class="a c d" style="left:518px;top:679px;width:47px;height:25px;line-height:25px;">0.87</div><div class="a c d" style="left:566px;top:679px;width:82px;height:25px;line-height:25px;">受平/半</div><div class="a c d" style="left:649px;top:679px;width:50px;height:25px;line-height:25px;">1.02</div><div class="a c d" style="left:700px;top:679px;width:64px;height:25px;line-height:25px;">2.83</div><div class="a c d" style="left:765px;top:679px;width:64px;height:25px;line-height:25px;">3.47</div><div class="a c d" style="left:830px;top:679px;width:66px;height:25px;line-height:25px;">2.31</div><div class="a c d" style="left:897px;top:679px;width:36px;height:25px;line-height:25px;"><span style="color:#d02424">胜</span></div><div class="a c d" style="left:934px;top:679px;width:37px;height:25px;line-height:25px;"><span style="color:#d02424">赢</span></div><div class="a c d" style="left:972px;top:679px;width:56px;height:25px;line-height:25px;"><span style="color:#d02424">大</span></div><div class="a c d" style="left:1px;top:705px;width:1028px;height:25px;line-height:25px;letter-spacing:0.2px;">近<span style="color:#d02424">10</span>场,胜6平2负2, 胜率:<span style="color:#d02424">60%</span> 让胜率:<span style="color:#d02424">60%</span> 大率:<span style="color:#d02424">60%</span> 单率:<span style="color:#d02424">50%</span></div>
</body></html>
